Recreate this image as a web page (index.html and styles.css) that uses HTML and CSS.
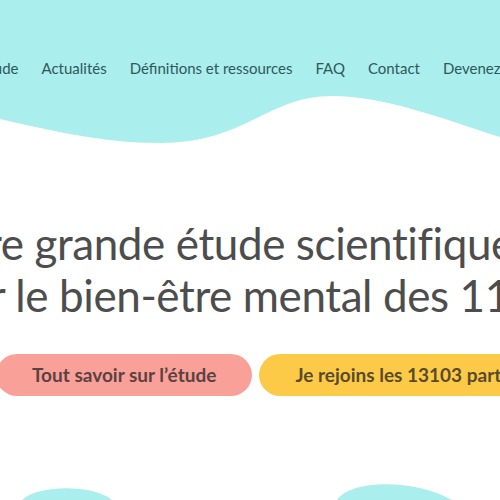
FILE: index.html
```html
<!DOCTYPE html>
<html lang="fr">
<head>
    <meta charset="UTF-8">
    <meta name="viewport" content="width=device-width, initial-scale=1.0">
    <title>L'étude</title>
    <link rel="stylesheet" href="styles.css">
</head>
<body>

    <!-- Top Header With Menu -->
    <header class="top">
        <nav class="menu">
            <a href="#">Accueil</a>
            <a href="#">L'étude</a>
            <a href="#">Actualités</a>
            <a href="#">Définitions et ressources</a>
            <a href="#">FAQ</a>
            <a href="#">Contact</a>
            <a href="#">Devenez partenaire</a>
        </nav>
    </header>
    <svg class="wave" viewBox="0 0 500 50" preserveAspectRatio="none">
        <path d="M0 0 H500 V41 C440 22 385 0 332 0 C268 0 245 47 160 47 C100 47 45 33 0 23 Z"/>
    </svg>

    <!-- Hero -->
    <section class="hero">
        <h1 class="hero-title">
            <span class="line line-one">Notre grande étude scientifique</span>
            <span class="line line-two">sur le bien-être mental des 11-24 ans</span>
        </h1>
        <div class="hero-actions">
            <a href="#" class="btn btn-pink">Tout savoir sur l’étude</a>
            <a href="#" class="btn btn-yellow">Je rejoins les 13103 participants</a>
        </div>
    </section>

    <!-- Bottom Blobs -->
    <svg class="blobs" viewBox="0 0 500 20">
        <path d="M22 20 C38 5 92 4 112 20 Z"/>
        <path d="M337 20 C352 -2 418 0 452 20 Z"/>
    </svg>

</body>
</html>
```

FILE: styles.css
```css
/* Page */
body {
    font-family: Lato, 'Noto Sans', sans-serif;
    background: #ffffff;
    margin: 0;
    padding: 0;
    width: 500px;
    height: 500px;
    overflow: hidden;
}

/* Teal Header */
.top {
    background: #aaeeed;
    height: 96px;
    padding-top: 58px;
    box-sizing: border-box;
}

.menu {
    display: flex;
    gap: 23px;
    margin-left: -99px;
    white-space: nowrap;
}

.menu a {
    font-size: 15px;
    line-height: 20px;
    color: #30585a;
    text-decoration: none;
}

/* Wave Under Header */
.wave {
    display: block;
    width: 500px;
    height: 50px;
    fill: #aaeeed;
}

/* Hero Title */
.hero {
    padding-top: 71px;
}

.hero-title {
    margin: 0 0 33px 0;
    font-size: 44px;
    line-height: 52px;
    font-weight: 400;
    letter-spacing: -0.4px;
    color: #4d4d4d;
    white-space: nowrap;
}

.line {
    display: block;
}

.line-one { margin-left: -86px; }
.line-two { margin-left: -53px; }

/* Buttons */
.hero-actions {
    display: flex;
    gap: 7px;
    margin-left: -4px;
    white-space: nowrap;
}

.btn {
    padding: 10px 36px;
    border-radius: 30px;
    font-size: 19px;
    line-height: 22px;
    font-weight: 700;
    text-decoration: none;
}

.btn-pink {
    background: #f9a199;
    color: #5b4141;
}

.btn-yellow {
    background: #fdca48;
    color: #5a4a2c;
}

/* Bottom Blobs */
.blobs {
    display: block;
    width: 500px;
    height: 20px;
    margin-top: 84px;
    fill: #aaeeed;
}
```
